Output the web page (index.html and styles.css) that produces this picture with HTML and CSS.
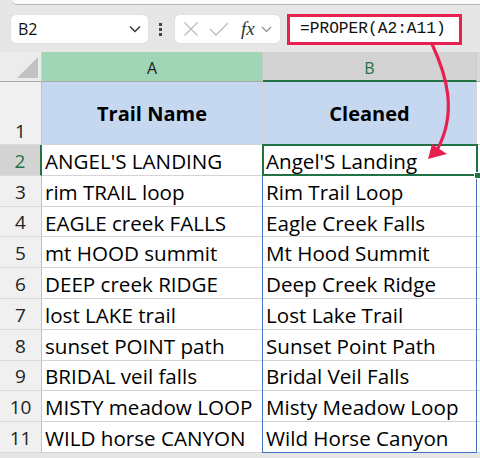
FILE: index.html
```html
<!DOCTYPE html>
<html>
<head>
<meta charset="utf-8">
<link rel="stylesheet" href="styles.css">
</head>
<body>
<div class="app">
  <div class="ribbon-edge"></div>
  <div class="formula-bar">
    <div class="name-box">
      <span class="cell-ref">B2</span>
      <svg class="chev" width="12" height="8" viewBox="0 0 12 8"><path d="M1 1.5 L6 6.5 L11 1.5" fill="none" stroke="#333" stroke-width="1.4"/></svg>
    </div>
    <div class="dots"><span></span><span></span><span></span></div>
    <div class="fx-box">
      <svg class="icon" width="16" height="16" viewBox="0 0 16 16"><path d="M1.5 1.5 L14.5 14.5 M14.5 1.5 L1.5 14.5" fill="none" stroke="#bcbcbc" stroke-width="1.3"/></svg>
      <svg class="icon" width="20" height="16" viewBox="0 0 20 16"><path d="M1 8 L7 14 L19 2" fill="none" stroke="#bcbcbc" stroke-width="1.3"/></svg>
      <span class="fx">fx</span>
      <svg class="chev-s" width="11" height="7" viewBox="0 0 11 7"><path d="M1 1 L5.5 5.5 L10 1" fill="none" stroke="#8a8a8a" stroke-width="1.1"/></svg>
    </div>
    <div class="formula">=PROPER(A2:A11)</div>
  </div>
  <div class="sheet">
    <div class="corner"><svg width="42" height="30" viewBox="0 0 42 30"><polygon points="38,5 38,26 17,26" fill="#c2c2c2"/></svg></div>
    <div class="ch ch-a">A</div>
    <div class="ch ch-b">B</div>
    <div class="ch ch-c"></div>

    <div class="rh rh-1">1</div>
    <div class="c head">Trail Name</div>
    <div class="c head">Cleaned</div>
    <div class="cc"></div>

    <div class="rh rh-sel">2</div>
    <div class="c">ANGEL'S LANDING</div>
    <div class="c">Angel'S Landing</div>
    <div class="cc"></div>

    <div class="rh">3</div>
    <div class="c">rim TRAIL loop</div>
    <div class="c">Rim Trail Loop</div>
    <div class="cc"></div>

    <div class="rh">4</div>
    <div class="c">EAGLE creek FALLS</div>
    <div class="c">Eagle Creek Falls</div>
    <div class="cc"></div>

    <div class="rh">5</div>
    <div class="c">mt HOOD summit</div>
    <div class="c">Mt Hood Summit</div>
    <div class="cc"></div>

    <div class="rh">6</div>
    <div class="c">DEEP creek RIDGE</div>
    <div class="c">Deep Creek Ridge</div>
    <div class="cc"></div>

    <div class="rh">7</div>
    <div class="c">lost LAKE trail</div>
    <div class="c">Lost Lake Trail</div>
    <div class="cc"></div>

    <div class="rh">8</div>
    <div class="c">sunset POINT path</div>
    <div class="c">Sunset Point Path</div>
    <div class="cc"></div>

    <div class="rh">9</div>
    <div class="c">BRIDAL veil falls</div>
    <div class="c">Bridal Veil Falls</div>
    <div class="cc"></div>

    <div class="rh">10</div>
    <div class="c">MISTY meadow LOOP</div>
    <div class="c">Misty Meadow Loop</div>
    <div class="cc"></div>

    <div class="rh">11</div>
    <div class="c">WILD horse CANYON</div>
    <div class="c">Wild Horse Canyon</div>
    <div class="cc"></div>

    <div class="range"></div>
    <div class="selection"><span class="handle"></span></div>
  </div>
  <svg class="arrow" width="480" height="458" viewBox="0 0 480 458">
    <path d="M432 44 C 446 74, 458 112, 437 150" fill="none" stroke="#e8204f" stroke-width="3.2"/>
    <polygon points="428,159 432,144 447,154" fill="#e8204f"/>
  </svg>
</div>
</body>
</html>
```

FILE: styles.css
```css
* { box-sizing: border-box; }
html, body { margin: 0; padding: 0; }
body {
  background: #e6e6e6;
  width: 480px;
  height: 458px;
  overflow: hidden;
  font-family: "Open Sans", "Noto Sans", sans-serif;
}
.app {
  position: relative;
  width: 480px;
  height: 458px;
}
.ribbon-edge {
  height: 5px;
  margin-left: 12px;
  background: #fafafa;
  border-bottom: 1px solid #b9b9b9;
  border-bottom-left-radius: 7px;
}
.formula-bar {
  height: 47px;
  display: flex;
  align-items: center;
  padding: 1px 0 0 11px;
}
.name-box {
  width: 137px;
  height: 28px;
  background: #fff;
  border-radius: 5px;
  display: flex;
  align-items: center;
  justify-content: space-between;
  padding: 0 7px 0 7px;
  box-shadow: 0 0 0 1px #e0e0e0;
}
.cell-ref {
  font-size: 16px;
  color: #111;
}
.chev { display: block; }
.dots {
  width: 4px;
  margin: 0 12px 0 11px;
  display: flex;
  flex-direction: column;
  gap: 2px;
}
.dots span {
  display: block;
  width: 3px;
  height: 3px;
  background: #444;
}
.fx-box {
  width: 105px;
  height: 28px;
  background: #fff;
  border-radius: 5px;
  box-shadow: 0 0 0 1px #e0e0e0;
  display: flex;
  align-items: center;
  padding-left: 8px;
}
.fx-box .icon { display: block; margin-right: 10px; }
.fx {
  font-family: "Liberation Serif", serif;
  font-style: italic;
  font-size: 19px;
  color: #333;
  margin-left: 2px;
  margin-right: 6px;
}
.chev-s { display: block; }
.formula {
  margin-left: 7px;
  width: 175px;
  height: 31px;
  background: #fff;
  border: 3px solid #e8204f;
  display: flex;
  align-items: center;
  padding-left: 10px;
  font-family: "Liberation Mono", monospace;
  font-size: 16.2px;
  color: #111;
}
.sheet {
  position: relative;
  display: grid;
  grid-template-columns: 42px 221px 214px 1fr;
  grid-template-rows: 30px 63px repeat(10, 30.8px);
  background: #fff;
}
.corner {
  background: #ececec;
  border-right: 1px solid #d0d0d0;
  border-bottom: 1px solid #a6a6a6;
}
.corner svg { display: block; }
.ch {
  display: flex;
  align-items: center;
  justify-content: center;
  font-size: 16px;
  color: #222;
  padding-top: 3px;
  border-right: 1px solid #c8c8c8;
  border-bottom: 1px solid #a6a6a6;
}
.ch-a { background: #a0d6b5; }
.ch-b {
  background: #d3d3d3;
  color: #217346;
  border-bottom: 2px solid #217346;
}
.ch-c { background: #d9d9d9; border-right: none; }
.rh {
  background: #f0f0f0;
  border-right: 1px solid #c2c2c2;
  border-bottom: 1px solid #dadada;
  display: flex;
  align-items: center;
  justify-content: center;
  font-size: 19px;
  color: #222;
  padding-top: 2px;
}
.rh-1 { align-items: flex-end; padding-bottom: 0; }
.rh-sel {
  background: #d3d3d3;
  color: #217346;
  border-right: 2px solid #217346;
}
.c {
  border-right: 1px solid #d4d4d4;
  border-bottom: 1px solid #d4d4d4;
  display: flex;
  align-items: center;
  padding: 2px 0 0 3px;
  font-size: 20.6px;
  color: #000;
  white-space: nowrap;
  overflow: hidden;
}
.head {
  background: #c5d8f0;
  font-weight: bold;
  font-size: 20px;
  justify-content: center;
  padding: 0;
}
.cc {
  border-bottom: 1px solid #d4d4d4;
}
.range {
  position: absolute;
  left: 262px;
  top: 93px;
  width: 215px;
  height: 308px;
  border: 1px solid #4472c4;
  pointer-events: none;
}
.selection {
  position: absolute;
  left: 262px;
  top: 92px;
  width: 216px;
  height: 32px;
  border: 2px solid #217346;
  pointer-events: none;
}
.handle {
  position: absolute;
  right: -5px;
  bottom: -5px;
  width: 7px;
  height: 7px;
  background: #217346;
  border: 1px solid #fff;
}
.arrow {
  position: absolute;
  left: 0;
  top: 0;
  pointer-events: none;
}
```
